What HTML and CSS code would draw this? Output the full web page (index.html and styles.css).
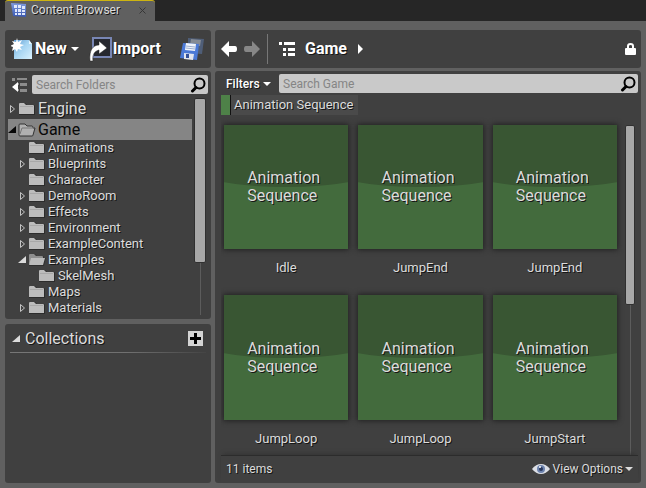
FILE: index.html
```html
<!DOCTYPE html>
<html lang="en">
<head>
<meta charset="utf-8">
<title>Content Browser</title>
<link rel="stylesheet" href="styles.css">
</head>
<body>
<svg class="defs" aria-hidden="true">
  <defs>
    <linearGradient id="paper" x1="0" y1="0" x2="1" y2="1"><stop offset="0" stop-color="#5f9ad0"/><stop offset=".45" stop-color="#a5d4f2"/><stop offset="1" stop-color="#d9f2ff"/></linearGradient>
    <linearGradient id="blue" x1="0" y1="0" x2="0" y2="1"><stop offset="0" stop-color="#7f9be0"/><stop offset="1" stop-color="#3a58b0"/></linearGradient>
    <symbol id="folder" viewBox="0 0 18 14"><path d="M1 13V2q0-1 1-1h5l2 2h7q1 0 1 1v9z" fill="#2c2c2c"/><path d="M1 12V2q0-1 1-1h4l2 2h7q1 0 1 1v8z" fill="#bcbcbc"/><path d="M2 4.500h13" stroke="#a8a8a8"/></symbol>
    <symbol id="folder-open" viewBox="0 0 18 14"><path d="M1 13V2q0-1 1-1h5l2 2h6q1 0 1 2h2l-2 8z" fill="#303030"/><path d="M1 11V2q0-1 1-1h4l2 2h6q1 0 1 1v3z" fill="#8e8e8e"/><path d="M3 5h14l-2 7H1z" fill="#bcbcbc"/></symbol>
    <symbol id="folder-lined" viewBox="0 0 18 14"><path d="M1 12V2q0-1 1-1h5l2 2h5q1 0 1 2h2l-2 7q0 1-1 1H2q-1 0-1-1z" fill="#b0b0b0" stroke="#333"/><path d="M2 11l2-6h12" fill="none" stroke="#777"/></symbol>
    <symbol id="closed" viewBox="0 0 8 10"><path d="M2.500 1.500v7l4-3.500z" fill="none" stroke="#c4c4c4"/></symbol>
    <symbol id="open" viewBox="0 0 8 10"><path d="M8 1v7H0z" fill="currentColor"/></symbol>
    <symbol id="down" viewBox="0 0 10 6"><path d="M1 1h8L5 5z" fill="currentColor"/></symbol>
    <symbol id="magnifier" viewBox="0 0 16 16"><circle cx="9.500" cy="6.500" r="5" fill="none" stroke="#000" stroke-width="2"/><path d="M6 10.500L2.500 14" stroke="#000" stroke-width="3" stroke-linecap="round"/></symbol>
  </defs>
</svg>

<header class="tabs">
  <div class="tab">
    <svg width="16" height="14" viewBox="0 0 16 14"><path d="M0 0l15 1v13l-13-1z" fill="url(#blue)"/><path d="M3 2h3v3H3zM7 2h3v3H7zM11 3h3v3h-3zM4 6h2v3H4zM7 6h3v3H7zM11 7h3v2h-3zM4 10h2v2H4zM7 10h3v2H7zM11 10h3v2h-3z" fill="#dfe7fb"/></svg>
    <span>Content Browser</span>
    <button class="close" aria-label="Close tab"><svg width="7" height="7" viewBox="0 0 7 7"><path d="M.5.5l6 6M6.500.5l-6 6" stroke="#363636"/></svg></button>
  </div>
</header>

<main class="browser">
  <div class="side">
    <div class="panel toolbar actions">
      <button class="action">
        <svg width="22" height="22" viewBox="0 0 22 22"><path d="M3 2h15l3 4v15H3z" fill="url(#paper)"/><path d="M18 2v4h3z" fill="#e8f7ff"/><path d="M6 0l1 4 4-2-2 4 4 1-4 2 2 3-4-1-1 3-2-3-3 2 1-4-3-1 4-2-2-3 4 1z" fill="#fff"/></svg>
        <span>New</span><svg class="drop" width="10" height="6"><use href="#down"/></svg>
      </button>
      <button class="action import">
        <svg width="24" height="26" viewBox="0 0 24 26"><path d="M4 2h18v19H4z" fill="#26282f" stroke="#7886b4" stroke-width="2"/><path d="M1 25C0 14 4 9 10 9V5l8 7-8 6v-4c-4 1-7 4-6 11z" fill="#fff" stroke="#222" stroke-width=".5"/></svg>
        <span>Import</span>
      </button>
      <button class="action save" aria-label="Save all">
        <svg width="24" height="23" viewBox="0 0 24 23"><path d="M8 0l16 1-2 15-14-1z" fill="#4f5e78"/><path d="M11 1l10 1-1 6-10-1z" fill="#858b94"/><path d="M3 5l16 1-2 16L0 20z" fill="#4b79d6"/><path d="M6 5l10 1-1 7-10-1z" fill="#f1f5fc"/><path d="M6 8l9 1M6 10l9 1" stroke="#9cadcd"/><path d="M4 15l10 1-1 6-9-1z" fill="#e2e6ef"/><path d="M6 16h3v4H6z" fill="#335099"/></svg>
      </button>
    </div>

    <section class="panel folders">
      <div class="searchrow">
        <button class="icon" aria-label="Toggle folders"><svg width="17" height="15" viewBox="0 0 17 15"><path d="M1 1h3v3H1zM6 1h10v2H6zM9 6h7v3H9zM9 12h7v3H9zM6 6h2v2H6zM6 12h2v2H6z" fill="#8c8c8c"/><path d="M7 5v10L1 10z" fill="#fff"/></svg></button>
        <label class="search"><input type="text" placeholder="Search Folders" aria-label="Search Folders"><svg width="16" height="16"><use href="#magnifier"/></svg></label>
      </div>
      <div class="scroller">
        <ul class="tree">
          <li><button class="row root"><svg class="arrow"><use href="#closed"/></svg><svg class="folder"><use href="#folder"/></svg>Engine</button></li>
          <li><button class="row root selected"><svg class="arrow"><use href="#open"/></svg><svg class="folder"><use href="#folder-lined"/></svg>Game</button>
            <ul>
              <li><button class="row"><svg class="arrow"></svg><svg class="folder"><use href="#folder"/></svg>Animations</button></li>
              <li><button class="row"><svg class="arrow"><use href="#closed"/></svg><svg class="folder"><use href="#folder"/></svg>Blueprints</button></li>
              <li><button class="row"><svg class="arrow"></svg><svg class="folder"><use href="#folder"/></svg>Character</button></li>
              <li><button class="row"><svg class="arrow"><use href="#closed"/></svg><svg class="folder"><use href="#folder"/></svg>DemoRoom</button></li>
              <li><button class="row"><svg class="arrow"><use href="#closed"/></svg><svg class="folder"><use href="#folder"/></svg>Effects</button></li>
              <li><button class="row"><svg class="arrow"><use href="#closed"/></svg><svg class="folder"><use href="#folder"/></svg>Environment</button></li>
              <li><button class="row"><svg class="arrow"><use href="#closed"/></svg><svg class="folder"><use href="#folder"/></svg>ExampleContent</button></li>
              <li><button class="row"><svg class="arrow"><use href="#open"/></svg><svg class="folder"><use href="#folder-open"/></svg>Examples</button>
                <ul><li><button class="row"><svg class="arrow"></svg><svg class="folder"><use href="#folder"/></svg>SkelMesh</button></li></ul>
              </li>
              <li><button class="row"><svg class="arrow"></svg><svg class="folder"><use href="#folder"/></svg>Maps</button></li>
              <li><button class="row"><svg class="arrow"><use href="#closed"/></svg><svg class="folder"><use href="#folder"/></svg>Materials</button></li>
            </ul>
          </li>
        </ul>
        <div class="bar"><div class="thumb tall"></div></div>
      </div>
    </section>

    <section class="panel collections">
      <div class="heading">
        <button class="expander"><svg class="arrow"><use href="#open"/></svg>Collections</button>
        <button class="add" aria-label="Add collection"><svg width="15" height="15" viewBox="0 0 15 15"><path d="M0 0h15v15H0z" fill="#d4d4d4"/><path d="M6 2h3v4h4v3H9v4H6V9H2V6h4z" fill="#000"/></svg></button>
      </div>
    </section>
  </div>

  <div class="content">
    <nav class="panel toolbar path">
      <button class="icon" aria-label="Back"><svg width="17" height="16" viewBox="0 0 17 16"><path d="M0 8l8-8v5h6q2 0 2 3t-2 3H8v5z" fill="#fff"/></svg></button>
      <button class="icon forward" aria-label="Forward"><svg width="17" height="16" viewBox="0 0 17 16"><path d="M17 8L9 0v5H3Q1 5 1 8t2 3h6v5z" fill="#878787"/></svg></button>
      <span class="rule"></span>
      <button class="icon" aria-label="Choose path"><svg width="17" height="14" viewBox="0 0 17 14"><path d="M0 0h3v3H0zM5 0h11v3H5zM4 6h3v3H4zM9 6h7v3H9zM4 11h3v3H4zM9 11h7v3H9z" fill="#fff"/></svg></button>
      <a class="crumb" href="#">Game</a>
      <svg width="6" height="10" viewBox="0 0 6 10"><path d="M0 0l5 5-5 5z" fill="#fff"/></svg>
      <button class="icon lock" aria-label="Lock"><svg width="11" height="12" viewBox="0 0 11 12"><path d="M3 6V3q0-2 2.500-2T8 3v3" fill="none" stroke="#fff" stroke-width="2"/><rect y="5" width="11" height="7" rx="1" fill="#fff"/></svg></button>
    </nav>

    <section class="panel assets">
      <div class="searchrow">
        <button class="filters">Filters<svg width="10" height="6"><use href="#down"/></svg></button>
        <label class="search"><input type="text" placeholder="Search Game" aria-label="Search Game"><svg width="16" height="16"><use href="#magnifier"/></svg></label>
      </div>
      <button class="chip">Animation Sequence</button>
      <div class="scroller">
        <div class="grid">
          <button class="tile"><span class="pic"><span>Animation<br>Sequence</span></span>Idle</button>
          <button class="tile"><span class="pic"><span>Animation<br>Sequence</span></span>JumpEnd</button>
          <button class="tile"><span class="pic"><span>Animation<br>Sequence</span></span>JumpEnd</button>
          <button class="tile"><span class="pic"><span>Animation<br>Sequence</span></span>JumpLoop</button>
          <button class="tile"><span class="pic"><span>Animation<br>Sequence</span></span>JumpLoop</button>
          <button class="tile"><span class="pic"><span>Animation<br>Sequence</span></span>JumpStart</button>
        </div>
        <div class="bar"><div class="thumb"></div></div>
      </div>
      <footer class="status">
        <span>11 items</span>
        <button class="view"><svg width="18" height="12" viewBox="0 0 18 12"><path d="M0 6q4-5 9-5t9 5q-4 5-9 5T0 6z" fill="#dcdfe6"/><circle cx="9" cy="6" r="4" fill="#6d83ad"/><circle cx="9" cy="6" r="2" fill="#27375c"/><circle cx="8" cy="4" r="1" fill="#fff"/></svg><span>View Options</span><svg width="10" height="6"><use href="#down"/></svg></button>
      </footer>
    </section>
  </div>
</main>
</body>
</html>
```

FILE: styles.css
```css
* { box-sizing: border-box; }
body {
  margin: 0;
  height: 100vh;
  display: flex;
  flex-direction: column;
  background: #606060;
  color: #dcdcdc;
  font: 13px/16px Roboto, sans-serif;
  text-shadow: 1px 1px 0 #161616;
  overflow: hidden;
}
button, input { font: inherit; color: inherit; border: 0; padding: 0; margin: 0; background: none; text-shadow: inherit; }
button { display: flex; align-items: center; text-align: left; white-space: nowrap; }
svg { flex: none; display: block; }
ul { list-style: none; margin: 0; padding: 0; }
.defs { position: absolute; width: 0; height: 0; }

.tabs { flex: none; display: flex; height: 21px; padding-left: 5px; background: #262626; }
.tab {
  display: flex;
  align-items: center;
  gap: 4px;
  width: 150px;
  padding: 0 9px 2px 6px;
  border-top: 1px solid #cdb411;
  border-radius: 3px 3px 0 0;
  background: #606060;
  font-size: 12px;
}
.close { margin-left: auto; }

.browser { flex: 1; min-height: 0; display: flex; gap: 4px; padding: 9px 5px 5px; }
.side, .content { display: flex; flex-direction: column; min-height: 0; gap: 3px; }
.side { flex: none; width: 206px; }
.content { flex: 1; min-width: 0; }
.panel { border-radius: 3px; background: #404040; }
.toolbar { flex: none; display: flex; align-items: center; height: 38px; color: #fff; font-size: 16px; font-weight: 700; }

.actions { padding: 0 7px 0 6px; }
.action { gap: 2px; }
.drop { margin-left: 1px; }
.import { margin-left: 9px; gap: 0; }
.save { margin-left: auto; }

.folders { flex: none; display: flex; flex-direction: column; height: 248px; padding: 4px 3px 4px; }
.searchrow { flex: none; display: flex; align-items: center; }
.folders .icon { width: 24px; padding-left: 3px; }
.search { flex: 1; min-width: 0; display: flex; align-items: center; height: 19px; padding: 0 2px 0 4px; border-radius: 2px; background: #c9c9c9; text-shadow: none; }
.search input { flex: 1; min-width: 0; color: #222; outline: 0; font-size: 12px; }
.search input::placeholder { color: #858585; opacity: 1; }
.scroller { flex: 1; min-height: 0; display: flex; }
.folders .scroller { margin-top: 4px; gap: 2px; }
.tree { flex: 1; min-width: 0; overflow: hidden; }
.row { width: 100%; height: 16px; padding-left: 10px; }
.arrow { width: 8px; height: 10px; }
.row .arrow { margin-right: 2px; }
.folder { width: 18px; height: 14px; margin-right: 2px; }
.tree ul ul .row { padding-left: 20px; }
.root { height: 21px; padding-left: 0; font-size: 16px; }
.selected { background: #858585; color: #080808; text-shadow: none; }

.bar { flex: none; width: 10px; background: linear-gradient(#5c5c5c, #5c5c5c) center / 1px 100% no-repeat; }
.thumb { height: 180px; border: 1px solid #303030; border-radius: 2px; background: #a8a8a8; }
.folders .bar { width: 12px; margin-right: 2px; }
.tall { height: 165px; }

.collections { flex: 1; margin-top: 2px; padding: 1px 5px; }
.heading { display: flex; align-items: center; justify-content: space-between; height: 28px; padding: 0 3px 0 2px; border-bottom: 1px solid; border-image: linear-gradient(90deg, #777, #707070 60%, #444) 1; }
.expander { gap: 5px; font-size: 16px; }

.path { padding: 0 11px 0 6px; }
.forward { margin-left: 5px; }
.rule { width: 1px; height: 30px; margin: 0 11px 0 7px; background: #777; }
.crumb { margin: 0 11px 0 9px; color: inherit; text-decoration: none; }
.lock { margin-left: auto; margin-right: -6px; }

.assets { flex: 1; min-height: 0; display: flex; flex-direction: column; padding: 3px 3px 0 6px; }
.filters { width: 58px; padding-left: 5px; gap: 2px; color: #fff; font-size: 12px; font-weight: 500; }
.chip { align-self: flex-start; flex: none; height: 20px; margin-top: 2px; padding: 0 5px 0 4px; border-left: 9px solid #4e8148; background: #4a4a4a; box-shadow: inset 1px 0 #111; }
.assets .scroller { padding: 10px 3px 0; gap: 8px; overflow: hidden; }
.grid { flex: 1; min-width: 0; display: grid; grid-template-columns: repeat(3, 1fr); gap: 19px 10px; align-content: start; }
.tile { flex-direction: column; gap: 11px; }
.pic {
  position: relative;
  display: flex;
  align-items: center;
  justify-content: center;
  width: 100%;
  aspect-ratio: 1;
  overflow: hidden;
  background: #436b3d;
  box-shadow: 0 0 5px 1px #222;
  font-size: 16px;
  line-height: 18px;
  padding-right: 5px;
}
.pic::before { content: ""; position: absolute; top: 0; left: -20%; right: -20%; height: 50%; border-radius: 0 0 50% 50% / 0 0 16px 16px; background: #395633; }
.pic span { position: relative; }
.status { flex: none; display: flex; align-items: center; justify-content: space-between; height: 28px; padding: 0 4px 2px 5px; border-top: 1px solid #2c2c2c; box-shadow: 0 -3px 4px -2px #333; font-size: 12px; }
.view { gap: 3px; }
.view svg:last-child { margin-left: -2px; }
```
